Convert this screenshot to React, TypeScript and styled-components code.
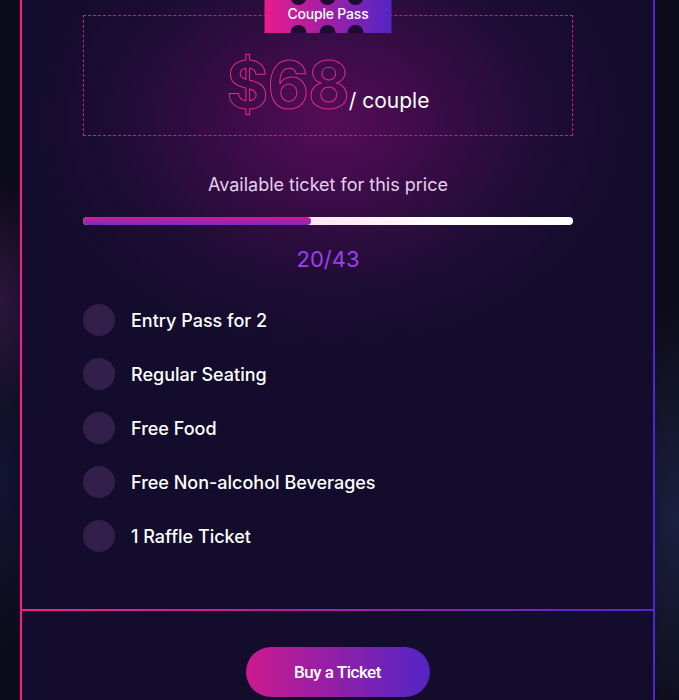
import React from 'react';
import styled, { createGlobalStyle } from 'styled-components';

const GlobalStyle = createGlobalStyle`
    html, body {
        margin: 0;
        padding: 0;
        height: 100%;
        overflow: hidden;
    }
    body {
        font-family: Inter, "Noto Sans", sans-serif;
        background-color: #0c0b19;
        background-image:
            radial-gradient(ellipse 60px 120px at 0px 300px, rgba(70, 30, 90, 0.55), transparent 100%),
            radial-gradient(ellipse 80px 220px at 679px 520px, rgba(40, 50, 95, 0.55), transparent 100%),
            radial-gradient(ellipse 60px 180px at 0px 480px, rgba(25, 25, 70, 0.6), transparent 100%);
    }
`;

const Page = styled.div`
    width: 679px;
    height: 700px;
    overflow: hidden;
`;

const Card = styled.div`
    margin: -60px 0 0 20px;
    width: 635px;
    box-sizing: border-box;
    border: 2px solid;
    border-image: linear-gradient(90deg, #fb1c86, #5424cc) 1;
    background: #130c2c;
`;

const TopSection = styled.div`
    padding: 73px 80px 57px 61px;
    background: radial-gradient(ellipse 300px 230px at 49% 180px, #560c58 0%, #3a0c47 35%, #1f0d35 70%, #130c2c 100%);
`;

const PriceBox = styled.div`
    position: relative;
    border: 1px dashed #d4158f;
    padding: 37px 0 18px;
    display: flex;
    justify-content: center;
    align-items: baseline;
`;

const Tag = styled.div`
    position: absolute;
    top: -19px;
    left: 50%;
    transform: translateX(-50%);
    width: 127px;
    height: 36px;
    box-sizing: border-box;
    padding-top: 7px;
    background: linear-gradient(90deg, #e91c8a, #5325c4);
    color: #fff;
    font-size: 14px;
    font-weight: 500;
    letter-spacing: -0.2px;
    text-align: center;
    line-height: 20px;
    overflow: hidden;
`;

const Notch = styled.span<{ $x: number; $edge: 'top' | 'bottom' }>`
    position: absolute;
    left: ${(p) => p.$x - 8}px;
    ${(p) => p.$edge}: -8px;
    width: 16px;
    height: 16px;
    border-radius: 50%;
    background: #1d0c31;
`;

const Amount = styled.span`
    font-size: 64px;
    font-weight: 700;
    line-height: 1;
    letter-spacing: -1px;
    color: transparent;
    -webkit-text-stroke: 1px #e42a82;
`;

const Unit = styled.span`
    font-size: 21px;
    color: #ffffff;
`;

const AvailLabel = styled.div`
    margin-top: 39px;
    text-align: center;
    font-size: 18px;
    color: #e4d0ee;
    line-height: 20px;
`;

const Track = styled.div`
    margin-top: 22px;
    height: 8px;
    border-radius: 4px;
    background: linear-gradient(90deg, #f4b8dc 0%, #fde6f3 48%, #ffffff 75%);
    overflow: hidden;
`;

const Fill = styled.div`
    height: 100%;
    border-radius: 4px;
    background: linear-gradient(180deg, #d31c8d, #7a2cc6);
`;

const Count = styled.div`
    margin-top: 21px;
    text-align: center;
    font-size: 22px;
    color: #9d3ff0;
    line-height: 26px;
`;

const FeatureList = styled.ul`
    list-style: none;
    margin: 32px 0 0;
    padding: 0;
    display: flex;
    flex-direction: column;
    gap: 22px;
`;

const Feature = styled.li`
    display: flex;
    align-items: center;
    gap: 16px;
    color: #ffffff;
    font-size: 18px;
    font-weight: 500;
`;

const Dot = styled.span`
    width: 32px;
    height: 32px;
    border-radius: 50%;
    background: #33204a;
    flex-shrink: 0;
`;

const BottomSection = styled.div`
    border-top: 2px solid;
    border-image: linear-gradient(90deg, #fb1c86, #5424cc) 1;
    padding: 36px 0 40px;
    display: flex;
    justify-content: center;
`;

const BuyButton = styled.button`
    width: 184px;
    height: 50px;
    border: none;
    border-radius: 25px;
    background: linear-gradient(90deg, #cc1a8e, #5325c4);
    color: #ffffff;
    font-family: Roboto, sans-serif;
    font-size: 17px;
    font-weight: 500;
    letter-spacing: -0.5px;
    cursor: pointer;
`;

const features = [
    'Entry Pass for 2',
    'Regular Seating',
    'Free Food',
    'Free Non-alcohol Beverages',
    '1 Raffle Ticket',
];

export default function App() {
    const sold = 20;
    const total = 43;
    const notches = [34, 63, 91];
    return (
        <Page>
            <GlobalStyle />
            <Card>
                <TopSection>
                    <PriceBox>
                        <Tag>
                            {notches.map((x) => (
                                <Notch key={'t' + x} $x={x} $edge="top" />
                            ))}
                            Couple Pass
                            {notches.map((x) => (
                                <Notch key={'b' + x} $x={x} $edge="bottom" />
                            ))}
                        </Tag>
                        <Amount>$68</Amount>
                        <Unit>/ couple</Unit>
                    </PriceBox>
                    <AvailLabel>Available ticket for this price</AvailLabel>
                    <Track>
                        <Fill style={{ width: `${(sold / total) * 100}%` }} />
                    </Track>
                    <Count>{sold}/{total}</Count>
                    <FeatureList>
                        {features.map((f) => (
                            <Feature key={f}>
                                <Dot />
                                {f}
                            </Feature>
                        ))}
                    </FeatureList>
                </TopSection>
                <BottomSection>
                    <BuyButton>Buy a Ticket</BuyButton>
                </BottomSection>
            </Card>
        </Page>
    );
}
